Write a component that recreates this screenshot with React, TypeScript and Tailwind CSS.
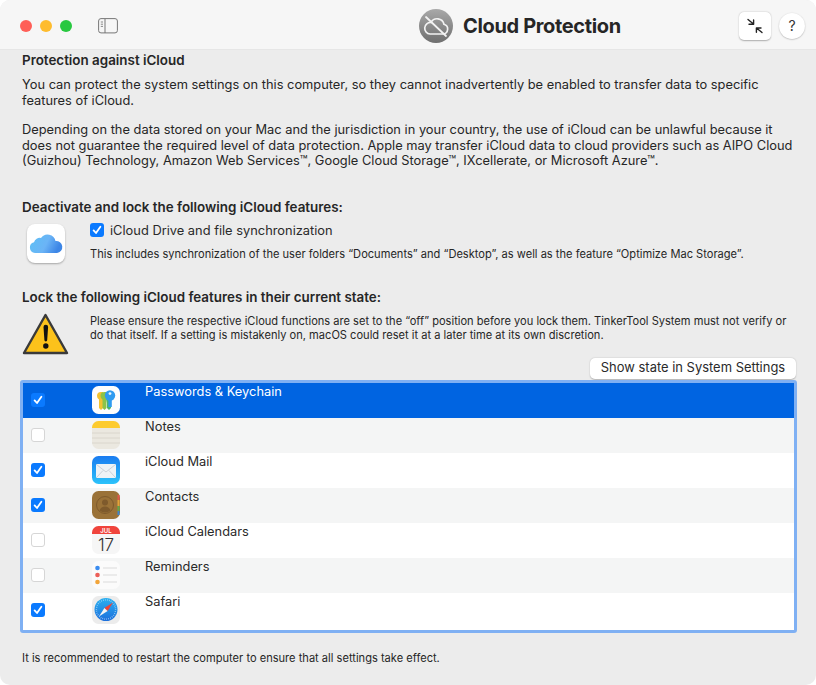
import React from "react";

const font = { fontFamily: '"Inter", "Liberation Sans", sans-serif' };

function Check({ on }: { on: boolean }) {
  return on ? (
    <div className="w-[14px] h-[14px] rounded-[3px] bg-[#0a7aff] flex items-center justify-center">
      <svg width="10" height="10" viewBox="0 0 10 10" fill="none">
        <path d="M1.6 5.4 L4 8 L8.4 1.8" stroke="#fff" strokeWidth="1.8" strokeLinecap="round" strokeLinejoin="round" />
      </svg>
    </div>
  ) : (
    <div className="w-[14px] h-[14px] rounded-[3px] bg-white border border-[#d6d6d6]" />
  );
}

function Passwords() {
  return (
    <svg width="30" height="30" viewBox="0 0 30 30">
      <rect x="1" y="1" width="28" height="28" rx="6.5" fill="#fdfdfd" />
      <path d="M6 11 a4 4 0 0 1 4-4 h2 v16 l-2 2 -2-2 v-8.500 a4 4 0 0 1-2-3.500z" fill="#f2c230" />
      <path d="M9.500 11 a4 4 0 0 1 4-4 h2 v16 l-2 2 -2-2 v-8.500 a4 4 0 0 1-2-3.500z" fill="#8bc34a" />
      <path d="M14 9h6v14l-2 2-2-2v-5z" fill="#4cb56a" />
      <circle cx="19" cy="10.500" r="5.200" fill="#2f9bf0" />
      <rect x="17.400" y="13" width="3.400" height="9" fill="#2f9bf0" />
      <circle cx="19" cy="8.600" r="1.400" fill="#e8f4ff" />
    </svg>
  );
}

function Notes() {
  return (
    <svg width="30" height="30" viewBox="0 0 30 30">
      <rect x="1" y="1" width="28" height="28" rx="6.5" fill="#ebe8e0" />
      <path d="M1 7.5 a6.5 6.5 0 0 1 6.5-6.5 h15 a6.5 6.5 0 0 1 6.5 6.5 v0.500 h-28z" fill="#fdcb2e" />
      <path d="M1 13h28M1 18h28M1 23h28" stroke="#d5d2c9" strokeWidth="0.8" />
    </svg>
  );
}

function Mail() {
  return (
    <svg width="30" height="30" viewBox="0 0 30 30">
      <defs>
        <linearGradient id="mailg" x1="0" y1="0" x2="0" y2="1">
          <stop offset="0" stopColor="#1a7bf0" />
          <stop offset="1" stopColor="#2cc3fb" />
        </linearGradient>
      </defs>
      <rect x="1" y="1" width="28" height="28" rx="6.5" fill="url(#mailg)" />
      <rect x="5" y="9" width="20" height="14" rx="1.2" fill="#eef2f6" />
      <path d="M5.5 9.5 L15 17 L24.5 9.5 M5.5 22.5 L12 15.5 M24.5 22.5 L18 15.5" stroke="#b9c3cc" strokeWidth="0.7" fill="none" />
    </svg>
  );
}

function Contacts() {
  return (
    <svg width="30" height="30" viewBox="0 0 30 30">
      <rect x="1" y="1" width="28" height="28" rx="6.5" fill="#9a7238" />
      <rect x="26.5" y="5" width="2" height="5" fill="#e0574c" />
      <rect x="26.5" y="10" width="2" height="6" fill="#e3a33a" />
      <rect x="26.5" y="16" width="2" height="5" fill="#62a84a" />
      <rect x="26.5" y="21" width="2" height="4" fill="#3d84cc" />
      <circle cx="14" cy="15" r="8.5" fill="none" stroke="#7e5a2c" strokeWidth="1" />
      <circle cx="14" cy="12.6" r="3" fill="#7e5a2c" />
      <path d="M8.6 20.5 a5.6 5.6 0 0 1 10.8 0 a8 8 0 0 1-10.8 0z" fill="#7e5a2c" />
    </svg>
  );
}

function Calendar() {
  return (
    <svg width="30" height="30" viewBox="0 0 30 30">
      <rect x="1" y="1" width="28" height="28" rx="6.5" fill="#f6f6f6" />
      <path d="M1 7.5 a6.5 6.5 0 0 1 6.5-6.5 h15 a6.5 6.5 0 0 1 6.5 6.5 v1.5 h-28z" fill="#f0443c" />
      <text x="15" y="7.6" textAnchor="middle" fontSize="6" fontWeight="600" fill="#fff" style={font}>JUL</text>
      <text x="15" y="25.500" textAnchor="middle" fontSize="17" fontWeight="300" fill="#333" style={font}>17</text>
    </svg>
  );
}

function Reminders() {
  return (
    <svg width="30" height="30" viewBox="0 0 30 30">
      <rect x="1" y="1" width="28" height="28" rx="6.5" fill="#fbfbfb" />
      <circle cx="6.5" cy="8" r="2.3" fill="#3a8cf0" />
      <circle cx="6.5" cy="15" r="2.3" fill="#ec5f58" />
      <circle cx="6.5" cy="22" r="2.3" fill="#f2a53a" />
      <path d="M12 8h14M12 15h14M12 22h14" stroke="#d4d4d4" strokeWidth="0.8" />
    </svg>
  );
}

function Safari() {
  return (
    <svg width="30" height="30" viewBox="0 0 30 30">
      <defs>
        <linearGradient id="safg" x1="0" y1="0" x2="0" y2="1">
          <stop offset="0" stopColor="#2bb0f0" />
          <stop offset="1" stopColor="#1c6fdc" />
        </linearGradient>
      </defs>
      <rect x="1" y="1" width="28" height="28" rx="6.5" fill="#ececec" />
      <circle cx="15" cy="14.5" r="11.5" fill="url(#safg)" />
      <circle cx="15" cy="14.5" r="9.6" fill="none" stroke="#cfe6fa" strokeWidth="1.4" strokeDasharray="0.5 1.5" />
      <path d="M22 7.5 L13.4 13 L16.6 16z" fill="#ee4438" />
      <path d="M8 21.5 L13.4 13 L16.6 16z" fill="#f4f4f4" />
    </svg>
  );
}

const rows = [
  { name: "Passwords & Keychain", on: true, icon: <Passwords /> },
  { name: "Notes", on: false, icon: <Notes /> },
  { name: "iCloud Mail", on: true, icon: <Mail /> },
  { name: "Contacts", on: true, icon: <Contacts /> },
  { name: "iCloud Calendars", on: false, icon: <Calendar /> },
  { name: "Reminders", on: false, icon: <Reminders /> },
  { name: "Safari", on: true, icon: <Safari /> },
];

export default function App() {
  return (
    <div className="w-[816px] h-[685px] bg-white overflow-hidden" style={font}>
      <div className="w-[816px] h-[685px] rounded-[10px] bg-[#ececec] overflow-hidden flex flex-col text-[#262626] text-[12.85px] leading-[15.5px]">
        <header className="h-[50px] shrink-0 bg-[#f6f6f6] border-b border-[#e6e6e6] flex items-center pt-[2px] pl-[20px] pr-[11px]">
          <div className="flex gap-[8px]">
            <div className="w-[12px] h-[12px] rounded-full bg-[#ff5f57]" />
            <div className="w-[12px] h-[12px] rounded-full bg-[#febc2e]" />
            <div className="w-[12px] h-[12px] rounded-full bg-[#28c840]" />
          </div>
          <svg className="ml-[26px]" width="20" height="16" viewBox="0 0 20 16" fill="none">
            <rect x="0.6" y="0.6" width="18.8" height="14.3" rx="2.4" stroke="#777" strokeWidth="1" />
            <path d="M7 1v14" stroke="#777" strokeWidth="1" />
            <path d="M2.8 4h2.2M2.8 6.2h2.2M2.8 8.4h2.2" stroke="#888" strokeWidth="1" />
          </svg>
          <div className="ml-[301px] w-[34px] h-[34px] rounded-full bg-gradient-to-b from-[#a9a9a9] to-[#6f6f6f] flex items-center justify-center">
            <svg width="28" height="24" viewBox="0 0 28 24" fill="none">
              <path d="M8 20 h13 a5 5 0 0 0 1-9.8 A7 7 0 0 0 9 8.5 a5.6 5.6 0 0 0-1 11.500z" stroke="#f2f2f2" strokeWidth="1.7" />
              <path d="M4 3 L24 22" stroke="#f2f2f2" strokeWidth="1.8" strokeLinecap="round" />
            </svg>
          </div>
          <div className="ml-[10px] text-[20px] font-bold text-[#262626] tracking-[-0.35px] leading-[24px]">Cloud Protection</div>
          <div className="ml-auto flex items-center gap-[8px]">
            <div className="w-[32px] h-[28px] rounded-[5px] bg-white shadow-[0_0.5px_1.5px_rgba(0,0,0,0.3)] flex items-center justify-center">
              <svg width="18" height="18" viewBox="0 0 18 18" fill="none" stroke="#222" strokeWidth="1.4" strokeLinecap="round" strokeLinejoin="round">
                <path d="M2 2.500 L7.500 7 M3 7.200 h4.600 v-4.200" />
                <path d="M16 15.500 L10.500 11 M15 11 h-4.600 v4.200" />
              </svg>
            </div>
            <div className="w-[26px] h-[26px] rounded-full bg-white shadow-[0_0.5px_1.5px_rgba(0,0,0,0.3)] flex items-center justify-center text-[14px] text-[#333]">?</div>
          </div>
        </header>

        <main className="flex-1 flex flex-col px-[22px] pt-[2px]">
          <h2 className="font-semibold leading-[16px] text-[13.4px]">Protection against iCloud</h2>
          <p className="mt-[9px]">
            You can protect the system settings on this computer, so they cannot inadvertently be enabled to transfer data to specific features of iCloud.
          </p>
          <p className="mt-[14px]">
            Depending on the data stored on your Mac and the jurisdiction in your country, the use of iCloud can be unlawful because it does not guarantee the required level of data protection. Apple may transfer iCloud data to cloud providers such as AIPO Cloud (Guizhou) Technology, Amazon Web Services™, Google Cloud Storage™, IXcellerate, or Microsoft Azure™.
          </p>

          <h2 className="font-semibold mt-[30px] leading-[16px] text-[13.4px]">Deactivate and lock the following iCloud features:</h2>
          <div className="flex mt-[8px] pl-[5px]">
            <div className="mt-[1px] w-[38px] h-[39px] rounded-[8px] bg-white shadow-[0_1px_2px_rgba(0,0,0,0.3)] flex items-center justify-center">
              <svg width="34" height="22" viewBox="0 0 34 22">
                <defs>
                  <linearGradient id="cloudg" x1="0" y1="0" x2="1" y2="0.300">
                    <stop offset="0" stopColor="#5cc0f5" />
                    <stop offset="0.600" stopColor="#6bb4f6" />
                    <stop offset="1" stopColor="#3d86e6" />
                  </linearGradient>
                </defs>
                <path d="M6 21 a5.500 5.500 0 0 1-1-10.800 A6 6 0 0 1 12 6 A8 8 0 0 1 26.500 9 a6 6 0 0 1 1.500 12z" fill="url(#cloudg)" />
              </svg>
            </div>
            <div className="ml-[25px]">
              <div className="flex items-center gap-[6px]">
                <Check on />
                <span className="text-[#2a2a2a]">iCloud Drive and file synchronization</span>
              </div>
              <p className="mt-[9px] text-[11.1px] leading-[14px]">
                This includes synchronization of the user folders “Documents” and “Desktop”, as well as the feature “Optimize Mac Storage”.
              </p>
            </div>
          </div>

          <h2 className="font-semibold mt-[26px] leading-[16px] text-[13.4px]">Lock the following iCloud features in their current state:</h2>
          <div className="flex mt-[7px]">
            <svg className="shrink-0" width="48" height="44" viewBox="0 0 48 44">
              <path d="M23.500 3 L45 41 H2 Z" fill="#fcc21b" stroke="#3a3a3a" strokeWidth="2.400" strokeLinejoin="round" />
              <path d="M21.500 15 a2.300 2.300 0 0 1 4.600 0 l-0.900 13 a1.400 1.400 0 0 1-2.800 0z" fill="#111" />
              <circle cx="23.800" cy="34" r="2.700" fill="#111" />
            </svg>
            <p className="ml-[20px] mt-[2px] text-[11.1px] leading-[14px] w-[706px] shrink-0">
              Please ensure the respective iCloud functions are set to the “off” position before you lock them. TinkerTool System must not verify or do that itself. If a setting is mistakenly on, macOS could reset it at a later time at its own discretion.
            </p>
          </div>

          <div className="flex justify-end mt-[2px] mr-[-2px]">
            <button className="h-[21px] w-[206px] rounded-[5px] bg-white shadow-[0_0.5px_1.5px_rgba(0,0,0,0.25)] text-[12.95px] text-[#2a2a2a]">
              Show state in System Settings
            </button>
          </div>

          <div className="mt-[1px] mx-[-2px] w-[777px] h-[253px] rounded-[3px] border-[3px] border-[#7fb0f3] bg-white overflow-hidden shrink-0">
            {rows.map((r, i) => (
              <div
                key={r.name}
                className={
                  i === 0
                    ? "h-[35px] flex bg-[#0064e1] text-white"
                    : i % 2 === 1
                    ? "h-[35px] flex bg-[#f4f5f5] text-[#2a2a2a]"
                    : "h-[35px] flex bg-white text-[#2a2a2a]"
                }
              >
                <div className="w-[68px] pl-[8px] flex items-center shrink-0">
                  <Check on={r.on} />
                </div>
                <div className="w-[54px] flex items-center shrink-0">{r.icon}</div>
                <div className="pt-[1px]">{r.name}</div>
              </div>
            ))}
          </div>

          <p className="mt-[18px] text-[11.1px] leading-[14px]">It is recommended to restart the computer to ensure that all settings take effect.</p>
        </main>
      </div>
    </div>
  );
}
